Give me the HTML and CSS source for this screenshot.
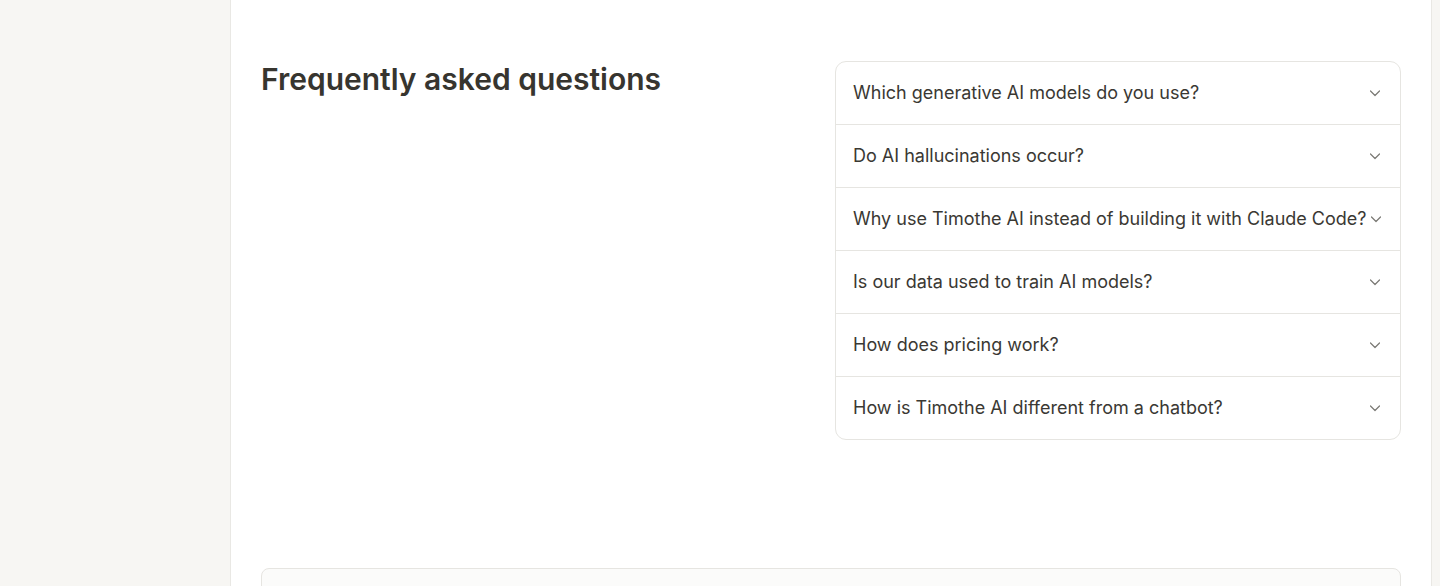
FILE: index.html
```html
<!DOCTYPE html>
<html lang="en">
<head>
<meta charset="utf-8">
<title>FAQ</title>
<link rel="stylesheet" href="styles.css">
</head>
<body>
<div class="app">
  <aside class="sidebar"></aside>
  <main class="main">
    <section class="faq">
      <h2 class="faq-title">Frequently asked questions</h2>
      <div class="faq-list">
        <div class="faq-item"><span class="faq-q">Which generative AI models do you use?</span><svg class="chev" viewBox="0 0 12 12" width="12" height="12"><path d="M1.5 4 6 8.5 10.5 4" fill="none" stroke="currentColor" stroke-width="1.2" stroke-linecap="round" stroke-linejoin="round"/></svg></div>
        <div class="faq-item"><span class="faq-q">Do AI hallucinations occur?</span><svg class="chev" viewBox="0 0 12 12" width="12" height="12"><path d="M1.5 4 6 8.5 10.5 4" fill="none" stroke="currentColor" stroke-width="1.2" stroke-linecap="round" stroke-linejoin="round"/></svg></div>
        <div class="faq-item"><span class="faq-q">Why use Timothe AI instead of building it with Claude Code?</span><svg class="chev" viewBox="0 0 12 12" width="12" height="12"><path d="M1.5 4 6 8.5 10.5 4" fill="none" stroke="currentColor" stroke-width="1.2" stroke-linecap="round" stroke-linejoin="round"/></svg></div>
        <div class="faq-item"><span class="faq-q">Is our data used to train AI models?</span><svg class="chev" viewBox="0 0 12 12" width="12" height="12"><path d="M1.5 4 6 8.5 10.5 4" fill="none" stroke="currentColor" stroke-width="1.2" stroke-linecap="round" stroke-linejoin="round"/></svg></div>
        <div class="faq-item"><span class="faq-q">How does pricing work?</span><svg class="chev" viewBox="0 0 12 12" width="12" height="12"><path d="M1.5 4 6 8.5 10.5 4" fill="none" stroke="currentColor" stroke-width="1.2" stroke-linecap="round" stroke-linejoin="round"/></svg></div>
        <div class="faq-item"><span class="faq-q">How is Timothe AI different from a chatbot?</span><svg class="chev" viewBox="0 0 12 12" width="12" height="12"><path d="M1.5 4 6 8.5 10.5 4" fill="none" stroke="currentColor" stroke-width="1.2" stroke-linecap="round" stroke-linejoin="round"/></svg></div>
      </div>
    </section>
    <div class="next-box"></div>
  </main>
  <aside class="rail"></aside>
</div>
</body>
</html>
```
FILE: styles.css
```css
* { box-sizing: border-box; }
html, body { margin: 0; padding: 0; }
body {
  font-family: Inter, "Noto Sans", sans-serif;
  color: #37352f;
  background: #f7f6f3;
  height: 586px;
  overflow: hidden;
}
.app {
  display: flex;
  height: 586px;
}
.sidebar {
  width: 230px;
  flex: none;
  background: #f7f6f3;
}
.main {
  width: 1202px;
  flex: none;
  background: #ffffff;
  border-left: 1px solid #e9e8e4;
  border-right: 1px solid #e9e8e4;
  padding: 0 30px;
}
.rail {
  flex: 1;
  background: #f7f6f3;
}
.faq {
  display: grid;
  grid-template-columns: 566px 566px;
  column-gap: 8px;
  padding-top: 61px;
  padding-bottom: 128px;
}
.faq-title {
  margin: 0;
  font-size: 30px;
  font-weight: 600;
  line-height: 36px;
  letter-spacing: 0;
  color: #37352f;
}
.faq-list {
  border: 1px solid #e6e5e1;
  border-radius: 11px;
  overflow: hidden;
}
.faq-item {
  display: flex;
  align-items: center;
  justify-content: space-between;
  gap: 3px;
  height: 63px;
  padding: 0 19px 0 17px;
  border-top: 1px solid #e6e5e1;
}
.faq-item:first-child {
  border-top: none;
  height: 62px;
}
.faq-q {
  font-size: 18px;
  line-height: 24px;
  color: #3a3833;
  white-space: nowrap;
}
.chev {
  flex: none;
  color: #7a7974;
}
.next-box {
  height: 40px;
  border: 1px solid #e6e5e1;
  border-radius: 8px;
  background: #fbfbfa;
}
```
